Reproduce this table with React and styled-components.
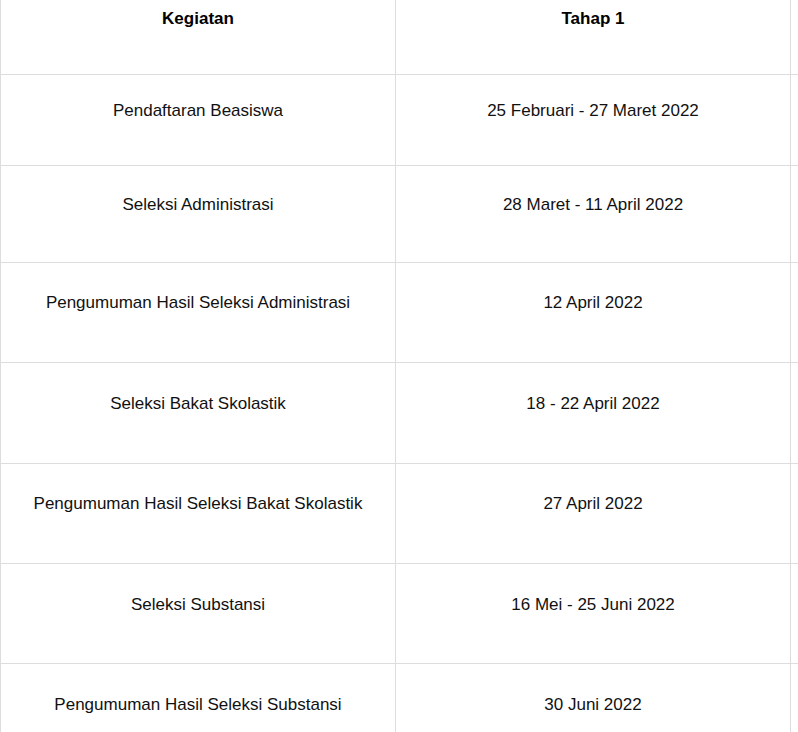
import React from "react";
import styled, { createGlobalStyle } from "styled-components";

const Global = createGlobalStyle`
  html, body {
    margin: 0;
    padding: 0;
    background: #ffffff;
    overflow: hidden;
  }
  body {
    font-family: "Liberation Sans", Arial, sans-serif;
  }
`;

const Viewport = styled.div`
  width: 798px;
  height: 732px;
  overflow: hidden;
  background: #ffffff;
`;

const Table = styled.div`
  display: grid;
  grid-template-columns: 395px 395px 400px;
  width: 1190px;
`;

const Cell = styled.div`
  box-sizing: border-box;
  height: ${(p) => p.$h}px;
  padding-top: ${(p) => p.$pt}px;
  border-left: 1px solid #dddddd;
  border-bottom: 1px solid #dddddd;
  text-align: center;
  font-size: 17px;
  line-height: 20px;
  color: ${(p) => (p.$head ? "#000000" : "#111111")};
  font-weight: ${(p) => (p.$head ? 700 : 400)};
`;

const header = ["Kegiatan", "Tahap 1", ""];

const rows = [
  { h: 91, pt: 26, cells: ["Pendaftaran Beasiswa", "25 Februari - 27 Maret 2022", ""] },
  { h: 97, pt: 29, cells: ["Seleksi Administrasi", "28 Maret - 11 April 2022", ""] },
  { h: 100, pt: 30, cells: ["Pengumuman Hasil Seleksi Administrasi", "12 April 2022", ""] },
  { h: 101, pt: 31, cells: ["Seleksi Bakat Skolastik", "18 - 22 April 2022", ""] },
  { h: 100, pt: 30, cells: ["Pengumuman Hasil Seleksi Bakat Skolastik", "27 April 2022", ""] },
  { h: 100, pt: 31, cells: ["Seleksi Substansi", "16 Mei - 25 Juni 2022", ""] },
  { h: 100, pt: 31, cells: ["Pengumuman Hasil Seleksi Substansi", "30 Juni 2022", ""] },
];

export default function App() {
  return (
    <Viewport>
      <Global />
      <Table>
        {header.map((t, i) => (
          <Cell key={"h" + i} $head $h={75} $pt={9}>
            {t}
          </Cell>
        ))}
        {rows.map((r, ri) =>
          r.cells.map((c, ci) => (
            <Cell key={ri + "-" + ci} $h={r.h} $pt={r.pt}>
              {c}
            </Cell>
          ))
        )}
      </Table>
    </Viewport>
  );
}
